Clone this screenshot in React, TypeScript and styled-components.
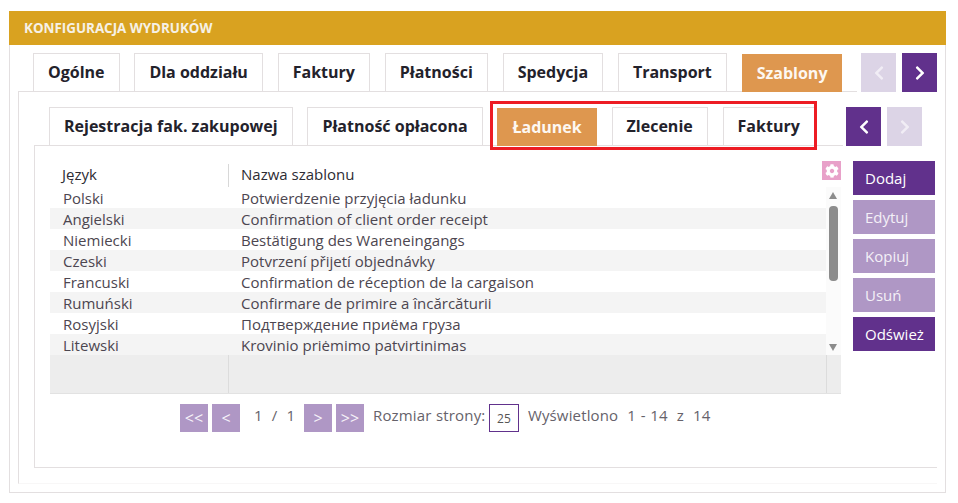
import React from 'react'
import styled, { createGlobalStyle } from 'styled-components'
import { FaChevronLeft, FaChevronRight, FaCog } from 'react-icons/fa'

const GlobalStyle = createGlobalStyle`
  html, body {
    margin: 0;
    background: #fff;
    font-family: "Open Sans", "Liberation Sans", sans-serif;
  }
  * {
    box-sizing: border-box;
  }
`

const Page = styled.div`
  width: 958px;
  height: 503px;
  padding: 11px 12px 0 9px;
  overflow: hidden;
`

const Panel = styled.section`
  height: 482px;
  border: 1px solid #e3dfe0;
  border-top: none;
  margin-bottom: 10px;
`

const PanelHeader = styled.header`
  height: 34px;
  margin: 0 -1px;
  padding-left: 15px;
  background: #d9a220;
  color: #f6f1e6;
  font-size: 13.4px;
  font-weight: 700;
  line-height: 34px;
`

const TabBar = styled.div<{ $inset?: boolean }>`
  display: flex;
  align-items: flex-start;
  margin: ${(p) => (p.$inset ? '0' : '8px 8px 0')};
`

const TabList = styled.div<{ $width: number }>`
  display: flex;
  align-items: flex-start;
  gap: 15px;
  width: ${(p) => p.$width}px;
  height: 39px;
  padding-left: 15px;
  border-bottom: 1px solid #e3dfe0;
`

const Tab = styled.div<{ $active?: boolean }>`
  height: 38px;
  padding: 0 14px;
  margin-top: ${(p) => (p.$active ? '1px' : '0')};
  margin-right: -0.15px;
  border: 1px solid #e3dfe0;
  border-bottom: none;
  border-color: ${(p) => (p.$active ? '#de974f' : '#e3dfe0')};
  background: ${(p) => (p.$active ? '#de974f' : '#fff')};
  color: ${(p) => (p.$active ? '#fdf8f2' : '#23222b')};
  font-size: 16px;
  font-weight: 700;
  line-height: 36px;
  white-space: nowrap;
`

const NavGroup = styled.div<{ $offset: number }>`
  display: flex;
  gap: 6px;
  margin-left: ${(p) => p.$offset}px;
`

const NavButton = styled.button<{ $enabled?: boolean }>`
  display: flex;
  align-items: center;
  justify-content: center;
  width: 35px;
  height: 39px;
  padding: 0;
  border: none;
  background: ${(p) => (p.$enabled ? '#61318c' : '#dcd4e6')};
  color: ${(p) => (p.$enabled ? '#fff' : '#f1edf5')};
  font-size: 16px;
`

const TabPane = styled.div`
  height: 392px;
  margin-left: 8px;
  margin-right: 8px;
  padding: 15px 0 0 15px;
  border-left: 1px solid #e3dfe0;
  border-bottom: 1px solid #f8f7f7;
`

const InnerPane = styled.div`
  display: flex;
  gap: 12px;
  height: 322px;
  padding: 15px 2px 0 15px;
  border-left: 1px solid #e3dfe0;
  border-bottom: 1px solid #e3dfe0;
`

const Content = styled.div`
  flex: none;
  width: 791px;
`

const Grid = styled.div`
  display: grid;
  grid-template-columns: 178px 1fr;
`

const HeadRow = styled(Grid)`
  grid-template-columns: 178px 1fr 19px;
  height: 26px;
`

const HeadCell = styled.div<{ $divided?: boolean }>`
  height: 23px;
  margin-top: 3px;
  padding-left: 12px;
  border-left: ${(p) => (p.$divided ? '1px solid #d8d8d8' : 'none')};
  color: #2d2b33;
  font-size: 15px;
  line-height: 21px;
`

const GearButton = styled.div`
  display: flex;
  align-items: center;
  justify-content: center;
  width: 19px;
  height: 19px;
  background: #e8a1c9;
  color: #fff;
  font-size: 14px;
`

const TableBody = styled.div`
  display: flex;
  height: 168px;
`

const Rows = styled.div`
  flex: 1;
`

const Row = styled(Grid)<{ $striped: boolean }>`
  height: 21px;
  background: ${(p) => (p.$striped ? '#f4f4f4' : '#fff')};
`

const Cell = styled.div`
  padding-left: 13px;
  color: #4c4650;
  font-size: 15px;
  line-height: 23px;
  white-space: nowrap;
`

const ScrollTrack = styled.div`
  position: relative;
  flex: none;
  width: 15px;
  background: #fbfbfb;
`

const ScrollThumb = styled.div`
  position: absolute;
  top: 19px;
  left: 3px;
  width: 9px;
  height: 75px;
  border-radius: 4px;
  background: #8c8c8c;
`

const ScrollArrow = styled.div<{ $down?: boolean }>`
  position: absolute;
  left: 3px;
  ${(p) => (p.$down ? 'bottom: 4px;' : 'top: 5px;')}
  width: 0;
  height: 0;
  border-left: 4.5px solid transparent;
  border-right: 4.5px solid transparent;
  ${(p) => (p.$down ? 'border-top: 7px solid #8c8c8c;' : 'border-bottom: 7px solid #8c8c8c;')}
`

const TableFooter = styled.div`
  display: grid;
  grid-template-columns: 178px 1fr 15px;
  height: 39px;
  background: #ededed;
  border-bottom: 1px solid #e2e2e2;
`

const FooterCell = styled.div`
  border-left: 1px solid #dcdcdc;
  &:first-child {
    border-left: none;
  }
`

const Pager = styled.div`
  display: flex;
  align-items: flex-start;
  height: 28px;
  margin-top: 10px;
  padding-left: 130px;
  color: #66626a;
  font-size: 15px;
  letter-spacing: 0.15px;
`

const PageButton = styled.div<{ $gap?: number }>`
  width: 28px;
  height: 28px;
  margin-left: ${(p) => p.$gap ?? 4}px;
  background: #af97c5;
  color: #f6f2f9;
  font-size: 16px;
  letter-spacing: 0;
  line-height: 28px;
  text-align: center;
`

const PageInfo = styled.span<{ $gap: number; $width?: number }>`
  margin-left: ${(p) => p.$gap}px;
  ${(p) => (p.$width ? `width: ${p.$width}px;` : '')}
  line-height: 22px;
  word-spacing: 0.5px;
  white-space: pre;
`

const PageSizeInput = styled.div`
  width: 30px;
  height: 28px;
  margin-left: 3.5px;
  padding-top: 3px;
  border: 1px solid #61318c;
  color: #555;
  font-size: 12px;
  letter-spacing: 0;
  line-height: 22px;
  text-align: center;
`

const SideActions = styled.div`
  display: flex;
  flex-direction: column;
  gap: 5px;
`

const ActionButton = styled.button<{ $enabled?: boolean }>`
  width: 82px;
  height: 34px;
  padding: 0 0 2px 12px;
  border: none;
  background: ${(p) => (p.$enabled ? '#61318c' : '#af97c5')};
  color: ${(p) => (p.$enabled ? '#fff' : '#f4f0f7')};
  font-family: inherit;
  font-size: 15px;
  line-height: 34px;
  text-align: left;
`

const Highlight = styled.div`
  position: absolute;
  left: 490px;
  top: 101px;
  width: 327px;
  height: 49px;
  border: 3px solid #ed1c24;
  pointer-events: none;
`

const mainTabs = ['Ogólne', 'Dla oddziału', 'Faktury', 'Płatności', 'Spedycja', 'Transport', 'Szablony']
const subTabs = ['Rejestracja fak. zakupowej', 'Płatność opłacona', 'Ładunek', 'Zlecenie', 'Faktury']
const templates = [
  ['Polski', 'Potwierdzenie przyjęcia ładunku'],
  ['Angielski', 'Confirmation of client order receipt'],
  ['Niemiecki', 'Bestätigung des Wareneingangs'],
  ['Czeski', 'Potvrzení přijetí objednávky'],
  ['Francuski', 'Confirmation de réception de la cargaison'],
  ['Rumuński', 'Confirmare de primire a încărcăturii'],
  ['Rosyjski', 'Подтверждение приёма груза'],
  ['Litewski', 'Krovinio priėmimo patvirtinimas'],
]
const actions = [
  { label: 'Dodaj', enabled: true },
  { label: 'Edytuj' },
  { label: 'Kopiuj' },
  { label: 'Usuń' },
  { label: 'Odśwież', enabled: true },
]

const App = () => (
  <Page>
    <GlobalStyle />
    <Panel>
      <PanelHeader>KONFIGURACJA WYDRUKÓW</PanelHeader>
      <TabBar>
        <TabList $width={840}>
          {mainTabs.map((tab) => (
            <Tab key={tab} $active={tab === 'Szablony'}>
              {tab}
            </Tab>
          ))}
        </TabList>
        <NavGroup $offset={4}>
          <NavButton>
            <FaChevronLeft />
          </NavButton>
          <NavButton $enabled>
            <FaChevronRight />
          </NavButton>
        </NavGroup>
      </TabBar>
      <TabPane>
        <TabBar $inset>
          <TabList $width={809}>
            {subTabs.map((tab) => (
              <Tab key={tab} $active={tab === 'Ładunek'}>
                {tab}
              </Tab>
            ))}
          </TabList>
          <NavGroup $offset={3}>
            <NavButton $enabled>
              <FaChevronLeft />
            </NavButton>
            <NavButton>
              <FaChevronRight />
            </NavButton>
          </NavGroup>
        </TabBar>
        <InnerPane>
          <Content>
            <HeadRow>
              <HeadCell>Język</HeadCell>
              <HeadCell $divided>Nazwa szablonu</HeadCell>
              <GearButton>
                <FaCog />
              </GearButton>
            </HeadRow>
            <TableBody>
              <Rows>
                {templates.map(([language, name], index) => (
                  <Row key={language} $striped={index % 2 === 1}>
                    <Cell>{language}</Cell>
                    <Cell>{name}</Cell>
                  </Row>
                ))}
              </Rows>
              <ScrollTrack>
                <ScrollArrow />
                <ScrollThumb />
                <ScrollArrow $down />
              </ScrollTrack>
            </TableBody>
            <TableFooter>
              <FooterCell />
              <FooterCell />
              <FooterCell />
            </TableFooter>
            <Pager>
              <PageButton $gap={0}>&lt;&lt;</PageButton>
              <PageButton>&lt;</PageButton>
              <PageInfo $gap={14} $width={50}>1  /  1</PageInfo>
              <PageButton $gap={0}>&gt;</PageButton>
              <PageButton>&gt;&gt;</PageButton>
              <PageInfo $gap={9}>Rozmiar strony:</PageInfo>
              <PageSizeInput>25</PageSizeInput>
              <PageInfo $gap={9}>Wyświetlono  1 - 14  z  14</PageInfo>
            </Pager>
          </Content>
          <SideActions>
            {actions.map((action) => (
              <ActionButton key={action.label} $enabled={action.enabled}>
                {action.label}
              </ActionButton>
            ))}
          </SideActions>
        </InnerPane>
      </TabPane>
    </Panel>
    <Highlight />
  </Page>
)

export default App
